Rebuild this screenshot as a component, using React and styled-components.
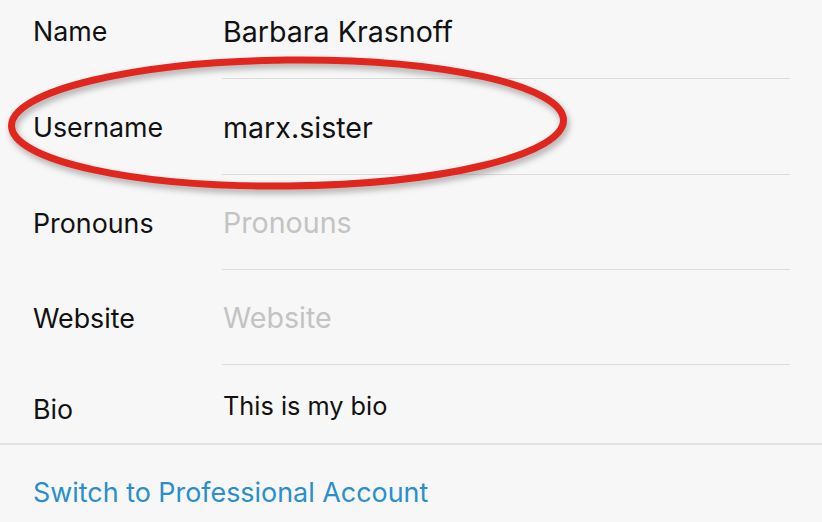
import React from "react";
import styled, { createGlobalStyle } from "styled-components";

const Global = createGlobalStyle`
  html, body { margin: 0; padding: 0; background: #f7f7f7; }
  body { font-family: Inter, "Noto Sans", sans-serif; -webkit-font-smoothing: antialiased; }
`;

const Page = styled.div`
  position: relative;
  width: 822px;
  height: 522px;
  overflow: hidden;
  background: #f7f7f7;
`;

const List = styled.div`
  margin-top: -17px;
  display: flex;
  flex-direction: column;
`;

const Row = styled.div`
  display: flex;
  align-items: center;
  height: ${(p) => p.$h || 95}px;
  padding-left: 33px;
  position: relative;
  &::after {
    content: "";
    display: ${(p) => (p.$noLine ? "none" : "block")};
    position: absolute;
    left: 222px;
    right: 32px;
    bottom: 0;
    height: 1px;
    background: #dcdcdc;
  }
`;

const Label = styled.div`
  width: 190px;
  flex: none;
  font-size: 26.8px;
  color: #111;
  margin-top: ${(p) => p.$dy || 0}px;
`;

const Value = styled.div`
  font-size: ${(p) => p.$size || 28.6}px;
  color: ${(p) => (p.$placeholder ? "#c3c3c3" : "#111")};
  margin-top: ${(p) => p.$dy || 0}px;
`;

const Divider = styled.div`
  height: 2px;
  background: #e2e2e2;
`;

const LinkRow = styled.div`
  display: flex;
  align-items: center;
  height: 78px;
  padding-left: 33px;
  padding-top: 16px;
  box-sizing: border-box;
`;

const Link = styled.a`
  font-size: 26.9px;
  color: #2b8fca;
  text-decoration: none;
`;

const Overlay = styled.svg`
  position: absolute;
  left: 0;
  top: 0;
  pointer-events: none;
  filter: drop-shadow(2px 4px 3px rgba(0, 0, 0, 0.3));
`;

export default function App() {
  return (
    <Page>
      <Global />
      <List>
        <Row $h={96}>
          <Label>Name</Label>
          <Value>Barbara Krasnoff</Value>
        </Row>
        <Row $h={96}>
          <Label>Username</Label>
          <Value>marx.sister</Value>
        </Row>
        <Row $h={95}>
          <Label>Pronouns</Label>
          <Value $placeholder>Pronouns</Value>
        </Row>
        <Row $h={95}>
          <Label>Website</Label>
          <Value $placeholder>Website</Value>
        </Row>
        <Row $h={78} $noLine>
          <Label $dy={10}>Bio</Label>
          <Value $size={25.3} $dy={2}>This is my bio</Value>
        </Row>
      </List>
      <Divider />
      <LinkRow>
        <Link href="#">Switch to Professional Account</Link>
      </LinkRow>
      <Overlay width="822" height="522" viewBox="0 0 822 522">
        <ellipse
          cx="287.5"
          cy="123"
          rx="276"
          ry="63"
          fill="none"
          stroke="#e1271d"
          strokeWidth="7"
          transform="rotate(-0.6 287.5 123)"
        />
      </Overlay>
    </Page>
  );
}
